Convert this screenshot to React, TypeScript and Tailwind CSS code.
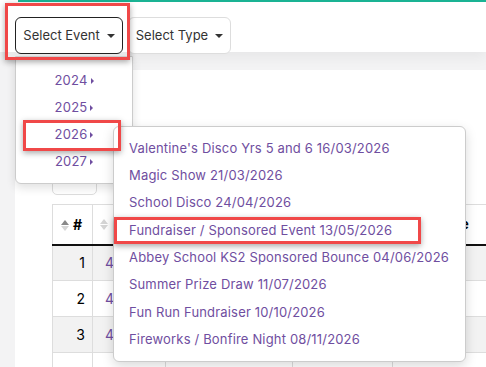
import React from "react";

const years = ["2024", "2025", "2026", "2027"];

const events = [
  "Valentine's Disco Yrs 5 and 6 16/03/2026",
  "Magic Show 21/03/2026",
  "School Disco 24/04/2026",
  "Fundraiser / Sponsored Event 13/05/2026",
  "Abbey School KS2 Sponsored Bounce 04/06/2026",
  "Summer Prize Draw 11/07/2026",
  "Fun Run Fundraiser 10/10/2026",
  "Fireworks / Bonfire Night 08/11/2026",
];

// only the first two columns peek out from under the menus
const rows = [
  { n: "1", ref: "4" },
  { n: "2", ref: "4" },
  { n: "3", ref: "4" },
  { n: "", ref: "" },
];

function CaretDown() {
  return <span className="ml-[7px] inline-block h-0 w-0 border-x-[4px] border-t-[4px] border-x-transparent border-t-[#333]" />;
}

function CaretRight() {
  return <span className="ml-[3px] inline-block h-0 w-0 border-y-[3px] border-l-[3px] border-y-transparent border-l-[#6f4ea0]" />;
}

function SortIcon({ dark }: { dark?: boolean }) {
  return (
    <span className="mr-[4px] inline-flex flex-col items-center gap-[1px] align-middle">
      <span className={`h-0 w-0 border-x-[4px] border-b-[5px] border-x-transparent ${dark ? "border-b-[#888]" : "border-b-[#d5d5d5]"}`} />
      <span className="h-0 w-0 border-x-[4px] border-t-[5px] border-x-transparent border-t-[#d5d5d5]" />
    </span>
  );
}

export default function App() {
  return (
    <div className="relative h-[367px] w-[486px] overflow-hidden bg-[#f3f3f4] font-['Inter',sans-serif] text-[#333]">
      {/* Top bar */}
      <div className="h-[52px] bg-white shadow-[0_6px_12px_rgba(0,0,0,0.05)]">
        <div className="ml-[18px] h-[2px] bg-[#1ab394]" />
        <div className="flex gap-[5px] pl-[15px] pt-[15px]">
          <button className="flex h-[37px] w-[108px] items-center justify-center rounded-[6px] border border-[#222] bg-white text-[13px]">
            Select Event
            <CaretDown />
          </button>
          <button className="flex h-[37px] w-[103px] items-center justify-center rounded-[6px] border border-[#ddd] bg-white text-[13px]">
            Select Type
            <CaretDown />
          </button>
        </div>
      </div>

      {/* Card with table */}
      <div className="ml-[15px] mt-[18px] h-[300px] bg-white pl-[37px] pt-[95px]">
        <div className="h-[30px] w-[45px] rounded-[5px] border border-[#ddd]" />
        <table className="mt-[9px] w-[480px] border-collapse text-[13px]">
          <thead>
            <tr className="h-[40px] border-y border-[#ddd] border-b-2 border-b-[#111]">
              <th className="w-[40px] border-x border-[#ddd] pl-[8px] text-left text-[14px] font-bold text-black">
                <SortIcon dark />#
              </th>
              <th className="w-[73px] border-x border-[#ddd] pl-[7px] text-left font-bold text-black">
                <SortIcon />
              </th>
              <th className="w-[127px] border-x border-[#ddd] pl-[6px] text-left font-bold text-black">
                <SortIcon />
              </th>
              <th className="w-[100px] border-x border-[#ddd] pl-[6px] text-left font-bold text-black">
                <SortIcon />
              </th>
              <th className="border-x border-[#ddd] pl-[6px] text-left font-bold text-black">
                <SortIcon />Attendee
              </th>
            </tr>
          </thead>
          <tbody>
            {rows.map((r, i) => (
              <tr key={i} className={`h-[36px] border-b border-[#ddd] ${i % 2 === 0 ? "bg-[#f2f2f2]" : "bg-white"}`}>
                <td className="border-x border-[#ddd] pr-[7px] text-right text-[14px] text-black">{r.n}</td>
                <td className="border-x border-[#ddd] pl-[12px] text-[14px] text-[#6f4ea0]">{r.ref}</td>
                <td className="border-x border-[#ddd]" />
                <td className="border-x border-[#ddd]" />
                <td className="border-x border-[#ddd]" />
              </tr>
            ))}
          </tbody>
        </table>
      </div>

      {/* Year dropdown */}
      <div className="absolute left-[15px] top-[56px] w-[118px] rounded-b-[6px] border border-[#ccc] bg-white pb-[8px] pt-[10px] shadow-[0_4px_10px_rgba(0,0,0,0.12)]">
        {years.map((y) => (
          <div key={y} className="flex h-[27px] items-center justify-center text-[13px] tracking-[0.2px] text-[#6f4ea0]">
            {y}
            <CaretRight />
          </div>
        ))}
      </div>

      {/* Event submenu */}
      <div className="absolute left-[113px] top-[126px] w-[353px] rounded-[6px] border border-[#ccc] bg-white pb-[8px] pt-[8px] shadow-[0_4px_12px_rgba(0,0,0,0.15)]">
        {events.map((e) => (
          <div key={e} className="flex h-[27.3px] items-center whitespace-nowrap pl-[15px] text-[13px] tracking-[0.17px] text-[#6f4ea0]">
            {e}
          </div>
        ))}
      </div>

      {/* Highlight boxes */}
      <div className="absolute left-[5px] top-[3px] h-[57px] w-[125px] border-[3px] border-[#f04848] shadow-[0_2px_6px_rgba(0,0,0,0.35)]" />
      <div className="absolute left-[23px] top-[120px] h-[31px] w-[98px] border-[3px] border-[#f04848] shadow-[0_2px_6px_rgba(0,0,0,0.35)]" />
      <div className="absolute left-[114px] top-[217px] h-[27px] w-[307px] border-[3px] border-[#f04848] shadow-[0_2px_6px_rgba(0,0,0,0.35)]" />
    </div>
  );
}
